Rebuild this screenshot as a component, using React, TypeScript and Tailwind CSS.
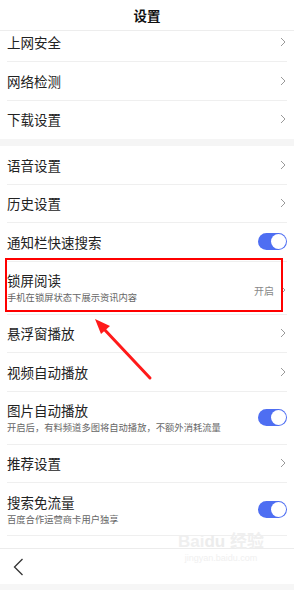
import React from "react";

type Row = {
  title: string;
  sub?: string;
  kind: "arrow" | "toggle" | "value";
  value?: string;
};

const groupA: Row[] = [
  { title: "上网安全", kind: "arrow" },
  { title: "网络检测", kind: "arrow" },
  { title: "下载设置", kind: "arrow" },
];

const groupB: Row[] = [
  { title: "语音设置", kind: "arrow" },
  { title: "历史设置", kind: "arrow" },
  { title: "通知栏快速搜索", kind: "toggle" },
  { title: "锁屏阅读", sub: "手机在锁屏状态下展示资讯内容", kind: "value", value: "开启" },
  { title: "悬浮窗播放", kind: "arrow" },
  { title: "视频自动播放", kind: "arrow" },
  { title: "图片自动播放", sub: "开启后，有料频道多图将自动播放，不额外消耗流量", kind: "toggle" },
  { title: "推荐设置", kind: "arrow" },
  { title: "搜索免流量", sub: "百度合作运营商卡用户独享", kind: "toggle" },
  { title: "自动清理缓存", kind: "arrow" },
];

const Chevron = () => (
  <svg width="6" height="10" viewBox="0 0 6 10" className="shrink-0">
    <path d="M1 1l4 4-4 4" fill="none" stroke="#9a9a9a" strokeWidth="1" />
  </svg>
);

const Toggle = () => (
  <div className="w-[29px] h-[17px] rounded-full bg-[#4e6ef2] flex items-center justify-end pr-[1px] shrink-0">
    <div className="w-[15px] h-[15px] rounded-full bg-white" />
  </div>
);

function SettingRow({ row, last }: { row: Row; last?: boolean }) {
  return (
    <div
      className={
        row.sub
          ? "h-[53px] mx-[7px] flex items-center justify-between border-b border-[#efefef]"
          : "h-[38.5px] mx-[7px] flex items-center justify-between border-b border-[#efefef]"
      }
      style={last ? { borderBottomColor: "transparent" } : undefined}
    >
      <div className="flex flex-col">
        <span className="text-[13.5px] leading-[18px] text-[#222]">{row.title}</span>
        {row.sub && (
          <span className="text-[9.3px] leading-[13px] text-[#666] mt-[2px] whitespace-nowrap">{row.sub}</span>
        )}
      </div>
      {row.kind === "arrow" && (
        <div className="pr-[1px]">
          <Chevron />
        </div>
      )}
      {row.kind === "toggle" && <Toggle />}
      {row.kind === "value" && (
        <div className="flex items-center gap-[6px] pr-[1px] mt-[5px]">
          <span className="text-[10px] text-[#888]">{row.value}</span>
          <Chevron />
        </div>
      )}
    </div>
  );
}

export default function App() {
  return (
    <div
      className="relative w-[294px] h-[590px] bg-white flex flex-col overflow-hidden"
      style={{ fontFamily: '"Noto Sans CJK SC", "Noto Sans", sans-serif' }}
    >
      {/* header */}
      <div className="relative z-10 h-[31px] shrink-0 bg-white border-b border-[#ededed] flex items-center justify-center">
        <span className="text-[13.5px] font-bold text-[#111]">设置</span>
      </div>

      {/* list */}
      <div className="flex-1 overflow-hidden">
        <div className="-mt-[7.5px]">
          {groupA.map((r, i) => (
            <SettingRow key={r.title} row={r} last={i === groupA.length - 1} />
          ))}
          <div className="h-[7px] bg-[#f5f5f5]" />
          {groupB.map((r) => (
            <SettingRow key={r.title} row={r} />
          ))}
        </div>
      </div>

      {/* bottom bar */}
      <div className="relative z-10 h-[36px] shrink-0 bg-white border-t border-[#ececec] flex items-center pl-[13px]">
        <svg width="11" height="18" viewBox="0 0 11 18">
          <path d="M9.5 1L1.5 9l8 8" fill="none" stroke="#333" strokeWidth="1.3" />
        </svg>
      </div>
      <div className="h-[6px] shrink-0 bg-[#f6f6f6]" />

      {/* annotation */}
      <div className="absolute left-[5px] top-[258px] w-[278px] h-[54px] border-2 border-[#ff0000] pointer-events-none" />
      <svg className="absolute left-0 top-0 pointer-events-none" width="294" height="590">
        <line x1="150" y1="378" x2="103" y2="328" stroke="#ff1a1a" strokeWidth="3" strokeLinecap="round" />
        <polygon points="95,319 110,326 101,334" fill="#ff1a1a" />
      </svg>

      {/* watermark */}
      <div className="absolute left-[178px] top-[533px] flex flex-col items-center pointer-events-none z-20 leading-none">
        <span className="text-[17px] font-bold text-[#efefef]" style={{ fontFamily: '"Liberation Sans", "Noto Sans CJK SC", sans-serif' }}>
          Bai<span className="text-[#ececec]">du</span> 经验
        </span>
        <span className="text-[9px] text-[#f0f0f0] mt-[4px]" style={{ fontFamily: '"Liberation Sans", sans-serif' }}>
          jingyan.baidu.com
        </span>
      </div>
    </div>
  );
}
